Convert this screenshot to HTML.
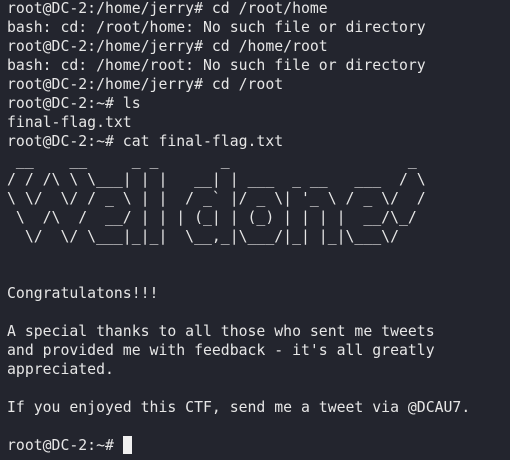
<!DOCTYPE html>
<html><head><style>
html,body{margin:0;padding:0;background:#23252e;width:510px;height:460px;overflow:hidden}
pre{margin:0;padding:0 0 0 7px;position:relative;top:-1px;font-family:"DejaVu Sans Mono",monospace;font-size:14.8px;line-height:19px;color:#e6e6e6}
.c{display:inline-block;width:9px;height:18px;background:#f0f0f0;vertical-align:-4px}
</style></head><body><pre>root@DC-2:/home/jerry# cd /root/home
bash: cd: /root/home: No such file or directory
root@DC-2:/home/jerry# cd /home/root
bash: cd: /home/root: No such file or directory
root@DC-2:/home/jerry# cd /root
root@DC-2:~# ls
final-flag.txt
root@DC-2:~# cat final-flag.txt
 __    __     _ _       _                    _
/ / /\ \ \___| | |   __| | ___  _ __   ___  / \
\ \/  \/ / _ \ | |  / _` |/ _ \| '_ \ / _ \/  /
 \  /\  /  __/ | | | (_| | (_) | | | |  __/\_/
  \/  \/ \___|_|_|  \__,_|\___/|_| |_|\___\/


Congratulatons!!!

A special thanks to all those who sent me tweets
and provided me with feedback - it's all greatly
appreciated.

If you enjoyed this CTF, send me a tweet via @DCAU7.

root@DC-2:~# <span class="c"></span></pre></body></html>
